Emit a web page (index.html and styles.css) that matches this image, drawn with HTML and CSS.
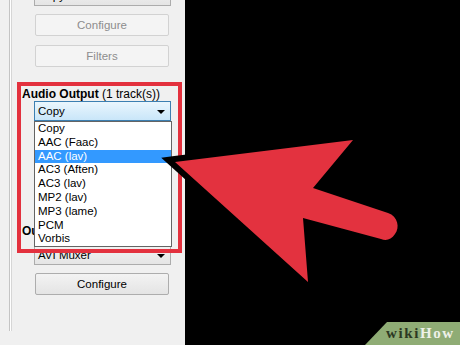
FILE: index.html
```html
<!DOCTYPE html>
<html lang="en">
<head>
    <meta charset="UTF-8">
    <meta name="viewport" content="width=device-width, initial-scale=1.0">
    <title>Audio Output</title>
    <link rel="stylesheet" href="styles.css">
</head>
<body>
    <div class="page">
        <div class="panel">
            <div class="frame">
                <div class="combo combo-top">Copy<span class="caret"></span></div>
                <div class="button disabled first">Configure</div>
                <div class="button disabled">Filters</div>

                <div class="label"><b>Audio Output</b> (1 track(s))</div>
                <div class="combo combo-open">Copy<span class="caret"></span></div>

                <div class="section">
                    <ul class="dropdown">
                        <li>Copy</li>
                        <li>AAC (Faac)</li>
                        <li class="selected">AAC (lav)</li>
                        <li>AC3 (Aften)</li>
                        <li>AC3 (lav)</li>
                        <li>MP2 (lav)</li>
                        <li>MP3 (lame)</li>
                        <li>PCM</li>
                        <li>Vorbis</li>
                    </ul>
                    <div class="label output-label"><b>Output Format</b></div>
                    <div class="combo combo-muxer">AVI Muxer<span class="caret"></span></div>
                    <div class="button">Configure</div>
                </div>
            </div>
        </div>

        <div class="highlight"></div>

        <svg class="arrow" width="460" height="345" viewBox="0 0 460 345">
            <path d="M175 162 L353 140 L313 188 L388 213 C398 216 400 228 395 234 C391 240 386 241 381 239 L303 218 L308 282 Z"
                  fill="#e3323f" stroke="#000" stroke-width="12" stroke-linejoin="miter" paint-order="stroke"/>
        </svg>

        <div class="badge"><span class="wiki">wiki</span><span class="how">How</span></div>
    </div>
</body>
</html>
```

FILE: styles.css
```css
body {
    margin: 0;
    background-color: #000;
    font-family: "Liberation Sans", Arial, sans-serif;
}

.page {
    position: relative;
    width: 460px;
    height: 345px;
    overflow: hidden;
    display: flex;
}

.panel {
    width: 185px;
    height: 345px;
    background-color: #f0f0f0;
    padding-left: 9px;
    box-sizing: border-box;
}

.frame {
    height: 100%;
    border-left: 1px solid #c4c4c4;
    box-shadow: inset 1px 0 #fff, inset 2px 0 #d6d6d6;
    padding-left: 24px;
    padding-right: 14px;
}

.combo {
    position: relative;
    height: 20px;
    box-sizing: border-box;
    border: 1px solid #acacac;
    background: linear-gradient(#f2f2f2, #e5e5e5);
    font-size: 11.5px;
    line-height: 18px;
    padding-left: 3px;
    color: #000;
}

.caret {
    position: absolute;
    right: 5px;
    top: 8px;
    width: 0;
    height: 0;
    border-left: 4px solid transparent;
    border-right: 4px solid transparent;
    border-top: 4px solid #000;
}

.combo-top {
    margin-top: -14px;
}

.combo-open {
    border-color: #3c7fb1;
    background: linear-gradient(#eaf6fd, #c9e6f9);
}

.button {
    height: 22px;
    box-sizing: border-box;
    margin: 8px 2px 0 1px;
    border: 1px solid #adadad;
    border-radius: 2px;
    background: linear-gradient(#f3f3f3, #e4e4e4);
    text-align: center;
    font-size: 11.5px;
    line-height: 20px;
    color: #000;
}

.button.disabled {
    border-color: #d2d2d2;
    background: #f4f4f4;
    color: #8d8d8d;
}

.button.disabled + .button.disabled {
    margin-top: 9px;
}

.label {
    margin: 21px 0 0 -12px;
    font-size: 12px;
    line-height: 13px;
    white-space: nowrap;
}

.section {
    position: relative;
    display: flow-root;
}

.dropdown {
    position: absolute;
    top: 0;
    left: 0;
    z-index: 2;
    width: 138px;
    box-sizing: border-box;
    margin: 0;
    padding: 0;
    list-style: none;
    background-color: #fff;
    border: 1px solid #646464;
    font-size: 11.5px;
}

.dropdown li {
    height: 13.8px;
    line-height: 13.8px;
    padding-left: 3px;
}

.dropdown .selected {
    background-color: #3399ff;
    color: #fff;
}

.output-label {
    margin-top: 104px;
}

.combo-muxer {
    margin-top: 7px;
}

.highlight {
    position: absolute;
    left: 17px;
    top: 82px;
    width: 165px;
    height: 171px;
    box-sizing: border-box;
    border: 4px solid #e3313e;
    z-index: 3;
}

.arrow {
    position: absolute;
    left: 0;
    top: 0;
    z-index: 4;
}

.badge {
    position: absolute;
    right: 0;
    bottom: 0;
    z-index: 5;
    width: 95px;
    height: 23px;
    box-sizing: border-box;
    padding-left: 21px;
    background-color: #8fac75;
    clip-path: polygon(22px 0, 100% 0, 100% 100%, 0 100%);
    font-family: "Liberation Serif", "Times New Roman", serif;
    font-weight: bold;
    font-size: 15px;
    letter-spacing: 1.6px;
    line-height: 23px;
}

.wiki {
    color: #2c3822;
}

.how {
    color: #eef1e8;
}
```
